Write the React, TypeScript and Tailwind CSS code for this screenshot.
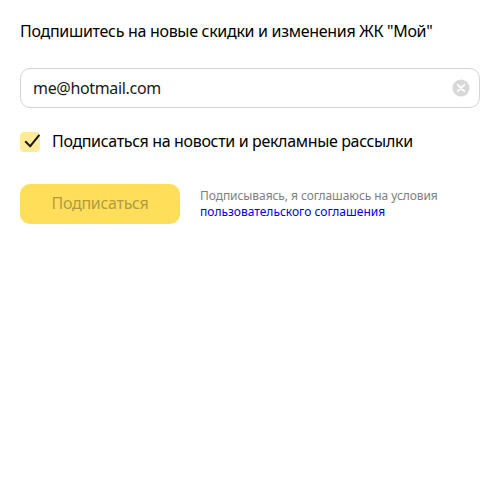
export default function App() {
  return (
    <main className="h-[500px] w-[500px] bg-white px-5 pt-5 font-['Noto_Sans',sans-serif] text-black">
      <h1 className="h-12 whitespace-nowrap text-base leading-[22px] tracking-[-0.3px]">
        Подпишитесь на новые скидки и изменения ЖК "Мой"
      </h1>
      <form onSubmit={(event) => event.preventDefault()}>
        <div className="flex h-10 items-center justify-between rounded-[10px] border border-[#d5d5d5] pl-3 pr-[9px]">
          <input
            type="email"
            aria-label="Email"
            defaultValue="me@hotmail.com"
            className="h-[38px] w-80 bg-transparent text-base tracking-[-0.33px] text-[#1a1a1a] outline-none"
          />
          <button type="button" aria-label="Очистить" className="size-[18px]">
            <svg viewBox="0 0 18 18" className="block size-[18px]">
              <circle cx="9" cy="9" r="8.6" fill="#d8d8d8" />
              <path d="M5.8 5.8l6.4 6.4M12.2 5.8l-6.4 6.4" stroke="white" strokeWidth="1.9" strokeLinecap="round" />
            </svg>
          </button>
        </div>
        <div className="mt-6 flex h-5 items-center gap-3">
          <span role="checkbox" aria-checked="true" className="size-5 shrink-0 rounded bg-[#ffeb99]">
            <svg viewBox="0 0 20 20" className="block size-5 overflow-visible" fill="none">
              <path d="M5.2 9.2l5 5L19.4 2.8" stroke="#1a1a1a" strokeWidth="2" />
            </svg>
          </span>
          <span className="whitespace-nowrap pb-0.5 text-base leading-5 tracking-[-0.34px]">
            Подписаться на новости и рекламные рассылки
          </span>
        </div>
        <div className="mt-8 flex h-10 gap-5">
          <button className="w-40 shrink-0 rounded-[10px] bg-[#ffde5a] pb-0.5 text-base tracking-[-0.3px] text-[#b39b3f]">
            Подписаться
          </button>
          <p className="whitespace-nowrap pt-1 text-xs leading-4 tracking-[-0.07px] text-[#808080]">
            Подписываясь, я соглашаюсь на условия
            <br />
            <a href="#" className="tracking-normal text-[#0000ee]">пользовательского соглашения</a>
          </p>
        </div>
      </form>
    </main>
  );
}
